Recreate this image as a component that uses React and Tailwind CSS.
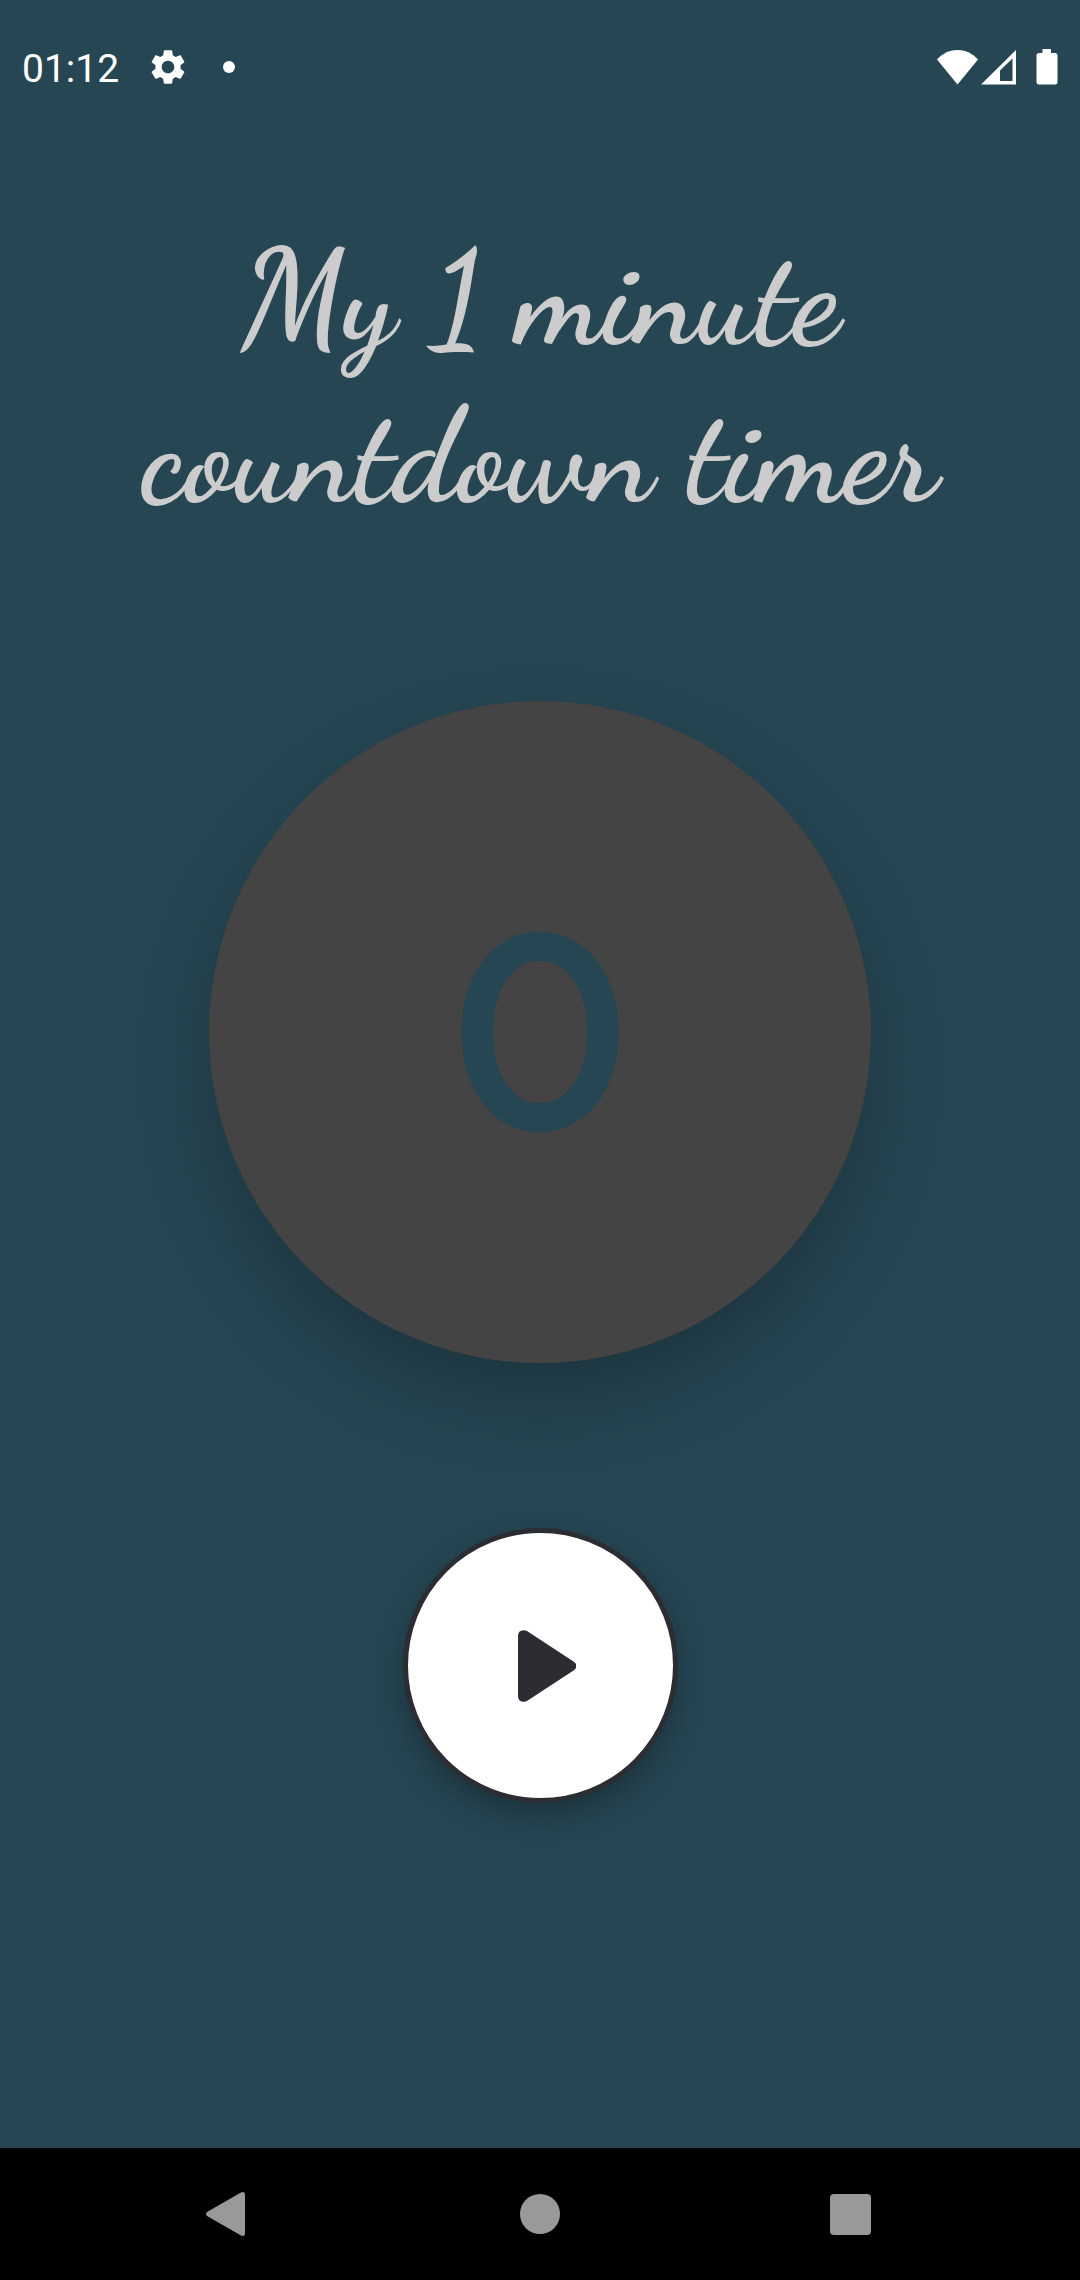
import React from "react";

function StatusBar() {
  return (
    <header className="flex h-[134px] items-center justify-between pl-[22px] pr-[22px] text-white">
      <div className="flex items-center">
        <span className="pt-1 font-[Roboto,sans-serif] text-[39px] leading-[40px]">01:12</span>
        <svg className="ml-[28px] size-[42px]" viewBox="0 0 24 24" fill="currentColor" aria-label="Settings">
          <path d="M19.14 12.94c.04-.3.06-.61.06-.94 0-.32-.02-.64-.07-.94l2.03-1.58c.18-.14.23-.41.12-.61l-1.92-3.32c-.12-.22-.37-.29-.59-.22l-2.39.96c-.5-.38-1.03-.7-1.62-.94l-.36-2.54c-.04-.24-.24-.41-.48-.41h-3.84c-.24 0-.43.17-.47.41l-.36 2.54c-.59.24-1.13.57-1.62.94l-2.39-.96c-.22-.08-.47 0-.59.22L2.74 8.87c-.12.21-.08.47.12.61l2.03 1.58c-.05.3-.09.63-.09.94s.02.64.07.94l-2.03 1.58c-.18.14-.23.41-.12.61l1.92 3.32c.12.22.37.29.59.22l2.39-.96c.5.38 1.03.7 1.62.94l.36 2.54c.05.24.24.41.48.41h3.84c.24 0 .44-.17.47-.41l.36-2.54c.59-.24 1.13-.56 1.62-.94l2.39.96c.22.08.47 0 .59-.22l1.92-3.32c.12-.22.07-.47-.12-.61l-2.01-1.58zM12 15.6c-1.98 0-3.6-1.62-3.6-3.6s1.62-3.6 3.6-3.6 3.6 1.62 3.6 3.6-1.62 3.6-3.6 3.6z" />
        </svg>
        <span className="ml-[34px] size-3 rounded-full bg-white" />
      </div>
      <div className="flex items-center">
        <svg className="h-9 w-[42px]" viewBox="0 0 42 36" fill="currentColor" aria-label="Wi-Fi">
          <path d="M0 10.500C6 4 13 1 20.500 1S35 4 41 10.500L20.500 35.500Z" />
        </svg>
        <svg className="ml-[2px] h-9 w-9" viewBox="0 0 36 36" fill="currentColor" aria-label="Mobile signal">
          <path fillRule="evenodd" d="M0 35.500 35 1V35.500ZM19 21.500V32H31.500V9.500Z" />
        </svg>
        <svg className="ml-[19px] h-9 w-[22px]" viewBox="0 0 22 36" fill="currentColor" aria-label="Battery">
          <path d="M6.500 0H15V4H19Q21.500 4 21.500 6.500V33Q21.500 35.500 19 35.500H3Q.5 35.500 .5 33V6.500Q.5 4 3 4H6.500Z" />
        </svg>
      </div>
    </header>
  );
}

function NavigationBar() {
  return (
    <nav className="flex h-[132px] items-center justify-center bg-black text-[#999999]">
      <button type="button" aria-label="Back" className="flex w-[312px] justify-center">
        <svg className="size-12" viewBox="0 0 48 48" fill="currentColor">
          <path d="M3 22 37 2.500Q41 1 41 5V43Q41 47 37 45.500L3 26Q1 24 3 22Z" />
        </svg>
      </button>
      <button type="button" aria-label="Home" className="flex w-[312px] justify-center">
        <svg className="size-12" viewBox="0 0 48 48" fill="currentColor">
          <circle cx="24" cy="24" r="20" />
        </svg>
      </button>
      <button type="button" aria-label="Recent apps" className="flex w-[312px] justify-center">
        <svg className="size-12" viewBox="0 0 48 48" fill="currentColor">
          <rect x="2" y="4" width="41" height="41" rx="4" />
        </svg>
      </button>
    </nav>
  );
}

export default function App() {
  return (
    <div className="flex min-h-screen flex-col bg-[#264653]">
      <StatusBar />
      <main className="flex grow flex-col items-center px-24 pt-[86px]">
        <h1 className="text-center font-['Dancing_Script','Liberation_Serif',cursive] text-[132px] font-bold leading-[158px] text-[#cccccc]">
          My 1 minute
          <br />
          countdown timer
        </h1>
        <div
          role="timer"
          className="mt-[165px] flex size-[662px] items-center justify-center rounded-full bg-[#444444] font-['Figtree','Inter',sans-serif] text-[277px] font-[570] leading-none text-[#264653] shadow-[0_38px_78px_rgba(0,0,0,0.23)]"
        >
          0
        </div>
        <button
          type="button"
          aria-label="Start"
          className="mt-[165px] flex size-[275px] items-center justify-center rounded-full border-[5px] border-[#2b2d33] bg-white text-[#2b2d33] shadow-[0_12px_32px_rgba(0,0,0,0.28)]"
        >
          <svg className="h-[72px] w-[72px]" viewBox="0 0 72 72" fill="currentColor">
            <path d="M14 6Q14 2 17 .8 20-.5 23 1L69.500 31.500Q72.500 33.500 72.500 36T69.500 40.500L23 71Q20 72.500 17 71.200 14 70 14 66Z" />
          </svg>
        </button>
      </main>
      <NavigationBar />
    </div>
  );
}
